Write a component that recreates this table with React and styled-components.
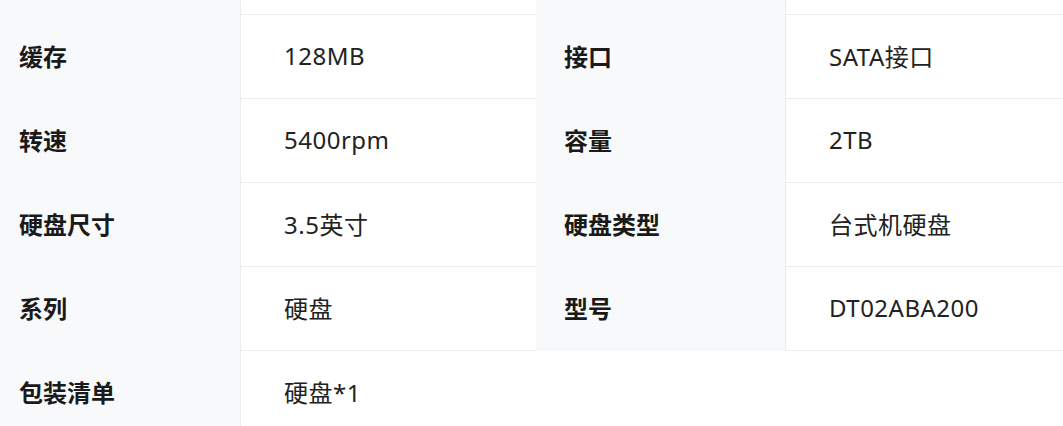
import React from "react";
import styled, { createGlobalStyle } from "styled-components";

const specs = [
    [["缓存", "128MB"], ["接口", "SATA接口"]],
    [["转速", "5400rpm"], ["容量", "2TB"]],
    [["硬盘尺寸", "3.5英寸"], ["硬盘类型", "台式机硬盘"]],
    [["系列", "硬盘"], ["型号", "DT02ABA200"]],
    [["包装清单", "硬盘*1"]]
]

const GlobalStyle = createGlobalStyle`
    html, body {
        margin: 0;
        padding: 0;
        background: #ffffff;
        overflow: hidden;
    }
    body {
        font-family: "Noto Sans", "Noto Sans CJK SC", sans-serif;
        color: #1f1f1f;
    }
`

const SpecTable = styled.div`
    display: grid;
    grid-template-columns: 250px 295px 250px 1fr;
    margin-left: -9px;
    width: calc(100% + 9px);
`

const Label = styled.div`
    display: flex;
    align-items: center;
    height: ${props => props.$cut ? "15px" : "84px"};
    padding: ${props => props.$cut ? "0 0 0 28px" : "0 0 3px 28px"};
    background: #f8f9fb;
    border-right: 1px solid #ebedf0;
    box-sizing: border-box;
    font-size: 24px;
    font-weight: 700;
    color: #1a1a1a;
`

const Value = styled.div`
    display: flex;
    align-items: center;
    height: ${props => props.$cut ? "15px" : "84px"};
    padding: ${props => props.$cut ? "0 0 0 43px" : "0 0 3px 43px"};
    border-bottom: ${props => props.$last ? "none" : "1px solid #ebedf0"};
    grid-column: ${props => props.$wide ? "span 3" : "auto"};
    box-sizing: border-box;
    font-size: 24px;
    letter-spacing: 0.5px;
    color: #222222;
`

const App = () => {
    return (
        <>
            <GlobalStyle />
            <SpecTable>
                {/* tail of the row above, cropped by the screenshot */}
                <Label $cut />
                <Value $cut />
                <Label $cut />
                <Value $cut />
                {specs.map((row, i) => row.map(([label, value]) => (
                    <React.Fragment key={label}>
                        <Label>{label}</Label>
                        <Value
                            $wide={row.length === 1}
                            $last={i === specs.length - 1}
                        >
                            {value}
                        </Value>
                    </React.Fragment>
                )))}
            </SpecTable>
        </>
    )
}

export default App
